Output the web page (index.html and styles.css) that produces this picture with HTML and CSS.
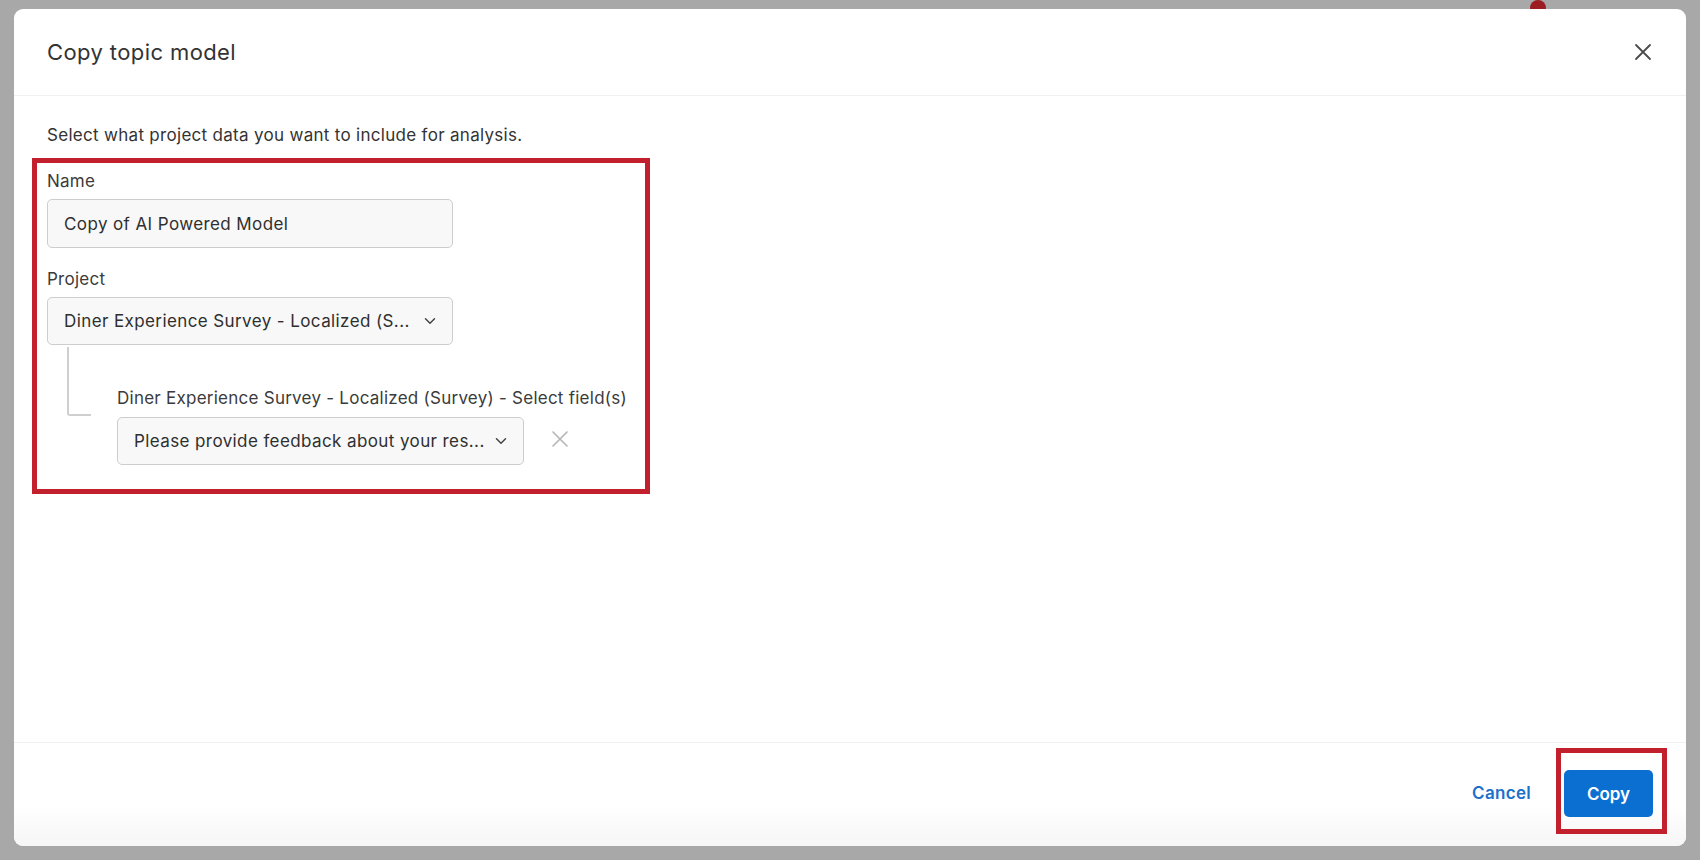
FILE: index.html
```html
<!DOCTYPE html>
<html lang="en">

<head>
    <meta charset="UTF-8">
    <meta name="viewport" content="width=device-width, initial-scale=1.0">
    <title>Copy topic model</title>
    <link rel="stylesheet" href="styles.css">
</head>

<body>
    <span class="badge"></span>

    <div class="modal">
        <header class="modal-header">
            <h1>Copy topic model</h1>
            <button class="close-btn" aria-label="Close">
                <svg width="18" height="18" viewBox="0 0 18 18">
                    <path d="M2 2L16 16M16 2L2 16" stroke="#4a4a4a" stroke-width="1.8" stroke-linecap="round" fill="none" />
                </svg>
            </button>
        </header>

        <div class="modal-body">
            <p class="intro">Select what project data you want to include for analysis.</p>

            <div class="highlight form-box">
                <label class="field-label">Name</label>
                <div class="field text-field">Copy of AI Powered Model</div>

                <label class="field-label">Project</label>
                <div class="field select-field">
                    <span>Diner Experience Survey - Localized (S...</span>
                    <svg class="chevron" width="12" height="8" viewBox="0 0 12 8">
                        <path d="M1.5 1.8L6 6.2L10.5 1.8" stroke="#444" stroke-width="1.5" fill="none" stroke-linecap="round" stroke-linejoin="round" />
                    </svg>
                </div>

                <div class="sub-field">
                    <div class="tree-col">
                        <div class="tree-line"></div>
                    </div>
                    <div class="sub-content">
                        <label class="field-label">Diner Experience Survey - Localized (Survey) - Select field(s)</label>
                        <div class="sub-row">
                            <div class="field select-field">
                                <span>Please provide feedback about your res...</span>
                                <svg class="chevron" width="12" height="8" viewBox="0 0 12 8">
                                    <path d="M1.5 1.8L6 6.2L10.5 1.8" stroke="#444" stroke-width="1.5" fill="none" stroke-linecap="round" stroke-linejoin="round" />
                                </svg>
                            </div>
                            <button class="remove-btn" aria-label="Remove">
                                <svg width="18" height="18" viewBox="0 0 18 18">
                                    <path d="M2 2L16 16M16 2L2 16" stroke="#b5b5b5" stroke-width="1.6" stroke-linecap="round" fill="none" />
                                </svg>
                            </button>
                        </div>
                    </div>
                </div>
            </div>
        </div>

        <footer class="modal-footer">
            <button class="cancel-btn">Cancel</button>
            <div class="highlight copy-box">
                <button class="copy-btn">Copy</button>
            </div>
        </footer>
    </div>
</body>

</html>
```

FILE: styles.css
```css
body {
    font-family: Inter, "Liberation Sans", Arial, sans-serif;
    background-color: #a8a8a8;
    margin: 0;
    padding: 9px 14px 14px 14px;
    height: 860px;
    box-sizing: border-box;
    overflow: hidden;
}

button {
    font-family: inherit;
    background: none;
    border: none;
    padding: 0;
    cursor: pointer;
}

.badge {
    position: absolute;
    left: 1530px;
    top: 0;
    width: 16px;
    height: 16px;
    border-radius: 50%;
    background-color: #9b1c22;
}

.modal {
    position: relative;
    height: 837px;
    background-color: #fff;
    border-radius: 9px;
    display: flex;
    flex-direction: column;
}

.modal-header {
    height: 86px;
    padding: 0 33px;
    display: flex;
    align-items: center;
    justify-content: space-between;
    border-bottom: 1px solid #f0f0f0;
}

.modal-header h1 {
    margin: 0;
    font-size: 22px;
    letter-spacing: 0.4px;
    font-weight: normal;
    color: #333;
}

.close-btn {
    width: 24px;
    height: 24px;
    display: flex;
    align-items: center;
    justify-content: center;
    margin-right: -2px;
}

.modal-body {
    flex: 1;
    padding: 29px 33px 0 33px;
}

.intro {
    margin: 0 0 13px 0;
    font-size: 17px;
    letter-spacing: 0.3px;
    line-height: 20px;
    color: #333;
}

.highlight {
    border: 5px solid #c3202e;
    box-sizing: border-box;
}

.form-box {
    width: 618px;
    margin-left: -15px;
    padding: 8px 10px 24px 10px;
}

.field-label {
    display: block;
    font-size: 17px;
    letter-spacing: 0.25px;
    line-height: 20px;
    color: #3b3b3b;
    margin-bottom: 8px;
}

.field {
    width: 406px;
    height: 49px;
    box-sizing: border-box;
    border: 1px solid #cdcdcd;
    border-radius: 5px;
    background-color: #f8f8f8;
    padding: 0 16px;
    display: flex;
    align-items: center;
    font-size: 17px;
    letter-spacing: 0.4px;
    color: #2f2f2f;
    margin-bottom: 21px;
}

.select-field {
    justify-content: space-between;
    height: 48px;
}

.sub-field {
    display: flex;
    margin-top: -19px;
}

.tree-col {
    width: 70px;
    flex-shrink: 0;
}

.tree-line {
    margin-left: 20px;
    width: 22px;
    height: 67px;
    border-left: 2px solid #cfcfcf;
    border-bottom: 2px solid #cfcfcf;
    border-bottom-left-radius: 3px;
}

.sub-content {
    padding-top: 41px;
}

.sub-content .field-label {
    margin-bottom: 9px;
}

.sub-row {
    display: flex;
    align-items: center;
    gap: 26px;
}

.sub-row .field {
    width: 407px;
    margin-bottom: 0;
}

.remove-btn {
    width: 20px;
    height: 20px;
    display: flex;
    align-items: center;
    justify-content: center;
    margin-top: -4px;
}

.modal-footer {
    height: 104px;
    box-sizing: border-box;
    border-top: 1px solid #f0f0f0;
    padding: 5px 19px 0 0;
    display: flex;
    justify-content: flex-end;
    align-items: flex-start;
    background: linear-gradient(to bottom, #fff 60%, #f6f6f6);
    border-radius: 0 0 9px 9px;
}

.cancel-btn {
    margin-top: 35px;
    margin-right: 25px;
    font-size: 17px;
    letter-spacing: 0.3px;
    font-weight: 600;
    color: #1d6fcc;
}

.copy-box {
    padding: 17px 9px 12px 3px;
}

.copy-btn {
    width: 89px;
    height: 47px;
    border-radius: 5px;
    background-color: #0b6fd2;
    color: #fff;
    font-size: 17px;
    font-weight: 600;
}
```
